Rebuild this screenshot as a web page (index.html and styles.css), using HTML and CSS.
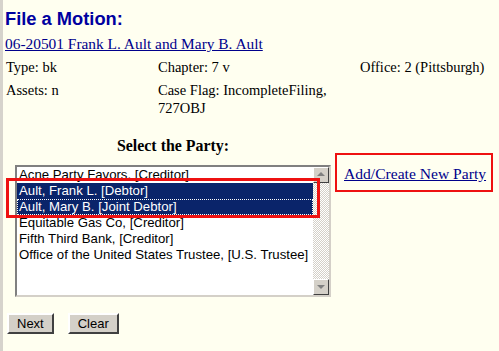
FILE: index.html
```html
<html>
  <head>
    <link rel="stylesheet" href="styles.css">
    <title>File a Motion</title>
  </head>
  <body>
    <div class="page">
      <h1 class="title">File a Motion:</h1>
      <div class="case-link"><a href="#">06-20501 Frank L. Ault and Mary B. Ault </a></div>

      <div class="info">
        <div>Type: bk</div>
        <div>Chapter: 7 v</div>
        <div>Office: 2 (Pittsburgh)</div>
        <div>Assets: n</div>
        <div>Case Flag: IncompleteFiling, 727OBJ</div>
        <div></div>
      </div>

      <div class="party-row">
        <div class="party-col">
          <div class="party-label">Select the Party:</div>
          <div class="listbox-wrap">
            <div class="listbox">
              <div class="items">
                <div class="item">Acne Party Favors, [Creditor]</div>
                <div class="item selected">Ault, Frank L. [Debtor]</div>
                <div class="item selected focus">Ault, Mary B. [Joint Debtor]</div>
                <div class="item">Equitable Gas Co, [Creditor]</div>
                <div class="item">Fifth Third Bank, [Creditor]</div>
                <div class="item">Office of the United States Trustee, [U.S. Trustee]</div>
              </div>
              <div class="scrollbar">
                <div class="arrow up"></div>
                <div class="track"></div>
                <div class="arrow down"></div>
              </div>
            </div>
            <div class="highlight"></div>
          </div>
        </div>
        <div class="add-box"><a href="#">Add/Create New Party</a></div>
      </div>

      <div class="buttons">
        <button class="btn">Next</button>
        <button class="btn">Clear</button>
      </div>
    </div>
  </body>
</html>
```

FILE: styles.css
```css
body {
  margin: 0;
  background-color: #fffff0;
  color: #000;
  font-family: "Liberation Serif", "Times New Roman", serif;
  font-size: 14.5px;
}
.page {
  min-height: 351px;
  border-left: 3px solid #d6d3cc;
  padding: 9px 0 0 2px;
  box-sizing: border-box;
}
a {
  color: #00008b;
}
.title {
  margin: 0;
  font-family: "Liberation Sans", Arial, sans-serif;
  font-size: 18.3px;
  line-height: 20px;
  color: #0000a0;
}
.case-link {
  margin-top: 6px;
  line-height: 18px;
  font-size: 15.4px;
}
.info {
  display: grid;
  grid-template-columns: 152px 202px 1fr;
  margin-top: 5px;
  padding-left: 1px;
  row-gap: 5px;
  line-height: 18px;
}
.info > div:nth-child(5) {
  width: 180px;
}
.party-row {
  display: flex;
  align-items: flex-start;
  margin-top: 20px;
}
.party-col {
  width: 316px;
  margin-left: 10px;
}
.party-label {
  text-align: center;
  font-weight: bold;
  font-size: 15.9px;
  line-height: 18px;
}
.listbox-wrap {
  position: relative;
  margin-top: 10px;
}
.listbox {
  display: flex;
  height: 132px;
  box-sizing: border-box;
  border: 2px solid;
  border-color: #808080 #d4d0c8 #d4d0c8 #808080;
  background: #fff;
  font-family: "Liberation Sans", Arial, sans-serif;
  font-size: 13.2px;
}
.items {
  flex: 1;
}
.item {
  height: 16px;
  line-height: 16px;
  padding-left: 2px;
  white-space: nowrap;
}
.item.selected {
  background: #0a246a;
  color: #fff;
}
.item.focus {
  outline: 1px dotted #fff;
  outline-offset: -1px;
}
.scrollbar {
  width: 16px;
  display: flex;
  flex-direction: column;
}
.track {
  flex: 1;
  background: repeating-conic-gradient(#d4d0c8 0 25%, #fff 0 50%) 0 0 / 2px 2px;
}
.arrow {
  position: relative;
  height: 16px;
  box-sizing: border-box;
  background: #d4d0c8;
  border: 1px solid;
  border-color: #fff #404040 #404040 #fff;
}
.arrow::after {
  content: "";
  position: absolute;
  left: 3px;
  border-left: 4px solid transparent;
  border-right: 4px solid transparent;
}
.arrow.up::after {
  top: 4px;
  border-bottom: 4px solid #808080;
}
.arrow.down::after {
  top: 5px;
  border-top: 4px solid #808080;
}
.highlight {
  position: absolute;
  left: -9px;
  top: 13px;
  width: 314px;
  height: 40px;
  box-sizing: border-box;
  border: 3px solid #ee1111;
}
.add-box {
  margin: 16px 0 0 4px;
  width: 158px;
  height: 39px;
  box-sizing: border-box;
  border: 2px solid #ee1111;
  padding: 11px 0 0 7px;
  font-size: 15.6px;
  line-height: 16px;
  white-space: nowrap;
}
.buttons {
  display: flex;
  gap: 14px;
  margin: 16px 0 0 2px;
}
.btn {
  height: 21px;
  padding: 0 8px;
  background: #d4d0c8;
  border: 2px solid;
  border-color: #fff #404040 #404040 #fff;
  font-family: "Liberation Sans", Arial, sans-serif;
  font-size: 13px;
  color: #000;
}
```
